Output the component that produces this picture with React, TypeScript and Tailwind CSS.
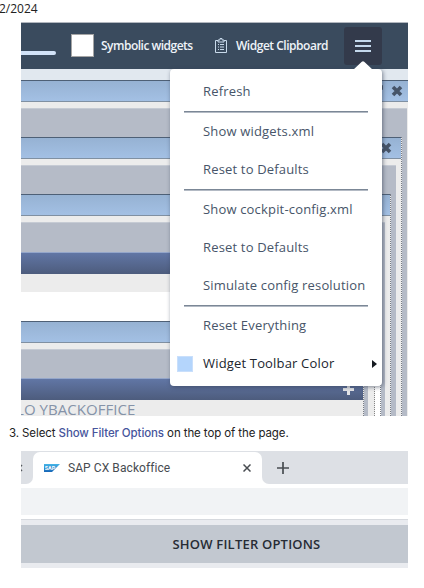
import React from "react";

function MenuItem({ children, track = "tracking-[0.17px]" }: { children: React.ReactNode; track?: string }) {
  return (
    <div className="flex h-[38px] items-center pl-[33px] pt-[2px]">
      <span className={`whitespace-nowrap ${track}`}>{children}</span>
    </div>
  );
}

function Separator() {
  return <div className="relative top-px ml-[14px] mr-[14px] h-[2px] border-t border-[#7b8796] bg-[#b3bac4]" />;
}

function Cross() {
  return (
    <svg width="12" height="12" viewBox="0 0 12 12" className="shrink-0">
      <path d="M2 2 10 10M10 2 2 10" stroke="#465468" strokeWidth="3.6" />
    </svg>
  );
}

function BlueBar({ children }: { children?: React.ReactNode }) {
  return (
    <div className="flex h-[22px] shrink-0 items-center justify-end border-y border-t-[#4e6076] border-b-[#8090a2] bg-linear-to-b from-[#96b2d3] to-[#a3c0e4]">
      {children}
    </div>
  );
}

function Header() {
  return (
    <div className="flex h-[46px] shrink-0 bg-[#3a4b5e] font-['Open_Sans','Noto_Sans',sans-serif] text-[12px] font-semibold text-[#eef3f8]">
      <div className="mt-[28px] h-[4px] w-[35px] shrink-0 rounded-r-full bg-[#d2e3f8]" />
      <div className="ml-[15px] mt-[11px] h-[23px] w-[23px] shrink-0 border border-[#a5a5a5] bg-white" />
      <span className="ml-[7px] mt-[14px] w-[93px] whitespace-nowrap leading-[18px] tracking-[-0.51px]">Symbolic widgets</span>
      <svg width="14" height="18" viewBox="0 0 14 18" className="ml-[20px] mt-[14px] shrink-0" fill="none" stroke="#c8daeb">
        <path d="M4 3.5H1.5v12h11v-12H10M4 5V3h2V1.5h2V3h2v2z" />
        <path d="M4 7.5h1m1 0h4M4 10h1m1 0h4M4 12.5h1m1 0h4" />
      </svg>
      <span className="ml-[8px] mt-[14px] w-[92px] whitespace-nowrap leading-[18px] tracking-[-0.48px]">Widget Clipboard</span>
      <div className="ml-[16px] mt-[4px] flex h-[38px] w-[38px] shrink-0 flex-col items-center justify-center gap-[3px] rounded-[3px] bg-[#333a4b]">
        <div className="h-[2px] w-4 bg-[#c4d8ec]" />
        <div className="h-[2px] w-4 bg-[#c4d8ec]" />
        <div className="h-[2px] w-4 bg-[#c4d8ec]" />
      </div>
    </div>
  );
}

function Widgets() {
  return (
    <div className="flex min-h-0 flex-1 flex-col bg-[#ececec]">
      <div className="h-[11px] shrink-0 bg-[#e1e8ef]" />
      <BlueBar>
        <div className="mb-[8px] mr-[8px] h-[5px] w-[2px] rounded-full bg-[#465468]" />
        <div className="mr-[5px] flex"><Cross /></div>
      </BlueBar>
      <div className="mr-px mt-[6px] min-h-0 flex-1 border-t border-[#c6cbd4] bg-[#b5bbc7] pr-[5px] pt-[28px]">
        <div className="flex h-full flex-col border-r border-dotted border-[#777c85] bg-[#ececec]">
          <BlueBar><div className="mr-[9px] flex"><Cross /></div></BlueBar>
          <div className="mr-[5px] mt-[6px] min-h-0 flex-1 border-t border-[#c6cbd4] bg-[#b5bbc7] pr-[5px] pt-[28px]">
            <div className="flex h-full flex-col border-r border-dotted border-[#777c85] bg-[#ececec]">
              <BlueBar />
              <div className="mr-[5px] mt-[6px] min-h-0 flex-1 border-t border-[#c6cbd4] bg-[#b5bbc7] pr-[4px] pt-[29px]">
                <div className="flex h-full flex-col border-r border-dotted border-[#777c85] bg-white">
                  <div className="h-[22px] shrink-0 border-t border-[#94a6ca] bg-linear-to-b from-[#6176a5] to-[#4d5c7d]" />
                  <div className="h-[18px] shrink-0 bg-[#ececec]" />
                  <div className="mr-[5px] mt-[29px] flex min-h-0 flex-1 flex-col border-r border-dotted border-[#858585] bg-[#ececec]">
                    <BlueBar />
                    <div className="mr-[6px] mt-[6px] min-h-0 flex-1 border-t border-[#c6cbd4] bg-[#b5bbc7] pr-[4px] pt-[28px]">
                      <div className="flex h-full flex-col border-r border-dotted border-[#777c85] bg-[#ececec]">
                        <div className="flex h-[22px] shrink-0 items-center justify-end border-t border-[#94a6ca] bg-linear-to-b from-[#6176a5] to-[#4d5c7d] pr-[9px]">
                          <svg width="11" height="11" viewBox="0 0 11 11"><path d="M5.5 0v11M0 5.5h11" stroke="#e3e4e7" strokeWidth="3" /></svg>
                        </div>
                        <div className="-ml-[5px] whitespace-nowrap font-['Open_Sans','Noto_Sans',sans-serif] text-[15px] leading-[18px] tracking-[0.05px] text-[#8593a8]">LO YBACKOFFICE</div>
                      </div>
                    </div>
                  </div>
                </div>
              </div>
            </div>
          </div>
        </div>
      </div>
    </div>
  );
}

function Menu() {
  return (
    <div className="absolute left-[149px] top-[46px] h-[317px] w-[212px] rounded-[4px] bg-white pt-[3px] font-['Open_Sans','Noto_Sans',sans-serif] text-[13px] text-[#475569] shadow-[1px_1px_4px_rgba(50,60,80,0.6)]">
      <svg width="20" height="9" viewBox="0 0 20 9" className="absolute -top-[8px] left-[183px]"><path d="M0 9 8.8 .8q1.200-1.200 2.400 0L20 9z" fill="white" /></svg>
      <MenuItem>Refresh</MenuItem>
      <Separator />
      <MenuItem>Show widgets.xml</MenuItem>
      <MenuItem>Reset to Defaults</MenuItem>
      <Separator />
      <MenuItem>Show cockpit-config.xml</MenuItem>
      <MenuItem>Reset to Defaults</MenuItem>
      <MenuItem>Simulate config resolution</MenuItem>
      <Separator />
      <MenuItem>Reset Everything</MenuItem>
      <div className="flex h-[38px] items-center pl-[7px] pt-[2px] text-[#20252e]">
        <div className="h-[16px] w-[16px] border border-[#c9dffb] bg-[#b4d5fc]" />
        <span className="ml-[10px] whitespace-nowrap tracking-[0.17px]">Widget Toolbar Color</span>
        <svg width="5" height="8" viewBox="0 0 5 8" className="ml-auto mr-[5px]"><path d="M0 0 5 4 0 8z" fill="#151a20" /></svg>
      </div>
    </div>
  );
}

function Browser() {
  return (
    <div className="ml-[21px] mt-[8px] flex h-[117px] w-[387px] flex-col overflow-hidden bg-white font-[Roboto,sans-serif] text-[#474b50]">
      <div className="flex h-[33px] shrink-0 border-t border-[#dde0e5] bg-white">
        <div className="flex w-[12px] items-center overflow-hidden rounded-br-[7px] bg-[#dde0e5]">
          <svg width="8" height="8" viewBox="0 0 8 8" className="-ml-[6px] shrink-0"><path d="m1 1 6 6m0-6-6 6" stroke="#54585d" strokeWidth="1.5" /></svg>
        </div>
        <div className="w-[229px] bg-[#dde0e5]">
          <div className="flex h-full items-center rounded-t-[7px] bg-white pl-[11px] pr-[11px]">
            <svg width="16" height="8" viewBox="0 0 16 8" className="shrink-0">
              <defs><linearGradient id="sap" x2="0" y2="1"><stop stopColor="#45b5e8" /><stop offset="1" stopColor="#1766b7" /></linearGradient></defs>
              <path d="M0 0h16L8 8H0z" fill="url(#sap)" />
              <text x="0.800" y="6" fontSize="5.500" fontWeight="700" fill="white" textLength="10.500">SAP</text>
            </svg>
            <span className="ml-[8px] whitespace-nowrap text-[12px] tracking-[0.08px]">SAP CX Backoffice</span>
            <svg width="8" height="8" viewBox="0 0 8 8" className="ml-auto"><path d="m.5.5 7 7m0-7-7 7" stroke="#484c51" strokeWidth="1.500" /></svg>
          </div>
        </div>
        <div className="flex flex-1 items-center rounded-bl-[7px] bg-[#dde0e5] pl-[15px]">
          <svg width="12" height="12" viewBox="0 0 12 12"><path d="M6 0v12M0 6h12" stroke="#484c51" strokeWidth="1.700" /></svg>
        </div>
      </div>
      <div className="mt-[4px] h-[27px] shrink-0 bg-[#f1f3f5]" />
      <div className="mt-[4px] h-[6px] shrink-0 border-t border-[#d6d9de] bg-[#e9ebef]" />
      <div className="flex h-[38px] shrink-0 items-center justify-center bg-[#c2c8d0] pl-[64px] pt-px font-['Open_Sans','Noto_Sans',sans-serif] text-[13px] font-semibold text-[#272c35]">
        <span className="whitespace-nowrap tracking-[0.2px]">SHOW FILTER OPTIONS</span>
      </div>
      <div className="h-[5px] shrink-0 bg-[#e9ebef]" />
    </div>
  );
}

export default function App() {
  return (
    <div className="h-[588px] w-[424px] overflow-hidden bg-white">
      <div className="-ml-px h-[22px] pt-px font-['Open_Sans','Noto_Sans',sans-serif] text-[12px] leading-[15px] text-[#222]">2/2024</div>
      <div className="relative ml-[21px] flex h-[394px] w-[387px] flex-col overflow-hidden border-t border-[#b2b7bf]">
        <Header />
        <Widgets />
        <Menu />
      </div>
      <div className="ml-[9px] mt-[8px] h-[19px] whitespace-nowrap font-[Inter,sans-serif] text-[11.5px] leading-[18px] tracking-[-0.1px] text-[#222]">
        3. Select <span className="font-medium text-[#46559c]">Show Filter Options</span> on the top of the page.
      </div>
      <Browser />
    </div>
  );
}
